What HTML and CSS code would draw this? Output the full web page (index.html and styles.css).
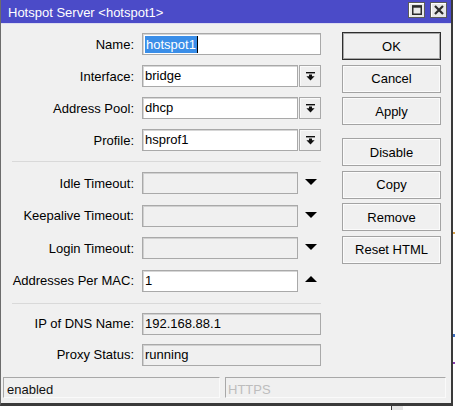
FILE: index.html
```html
<!DOCTYPE html>
<html>
<head>
<meta charset="utf-8">
<link rel="stylesheet" href="styles.css">
</head>
<body>
<div class="desktop">
  <div class="window">
    <div class="titlebar">
      <span class="title">Hotspot Server &lt;hotspot1&gt;</span>
      <div class="tbtns">
        <span class="tbtn"><svg width="10" height="10" viewBox="0 0 10 10"><rect x="0.75" y="1" width="8.5" height="8.25" fill="none" stroke="#2b2b2b" stroke-width="1.5"/><rect x="0" y="0.5" width="10" height="2.2" fill="#2b2b2b"/></svg></span>
        <span class="tbtn"><svg width="10" height="10" viewBox="0 0 10 10"><path d="M1 1 L9 9 M9 1 L1 9" stroke="#2b2b2b" stroke-width="2.2" fill="none"/></svg></span>
      </div>
    </div>
    <div class="content">
      <div class="form">
        <div class="group g1">
          <div class="row"><span class="lbl">Name:</span><div class="field"><div class="input full"><span class="hl">hotspot1</span><span class="caret"></span></div></div></div>
          <div class="row"><span class="lbl">Interface:</span><div class="field"><div class="input combo">bridge</div><span class="ddbtn"><svg width="9" height="9" viewBox="0 0 9 9"><rect x="0" y="0" width="9" height="1.4" fill="#111"/><polygon points="3,2.6 6,2.6 6,4.2 8.6,4.2 4.5,8.6 0.4,4.2 3,4.2" fill="#111"/></svg></span></div></div>
          <div class="row"><span class="lbl">Address Pool:</span><div class="field"><div class="input combo">dhcp</div><span class="ddbtn"><svg width="9" height="9" viewBox="0 0 9 9"><rect x="0" y="0" width="9" height="1.4" fill="#111"/><polygon points="3,2.6 6,2.6 6,4.2 8.6,4.2 4.5,8.6 0.4,4.2 3,4.2" fill="#111"/></svg></span></div></div>
          <div class="row"><span class="lbl">Profile:</span><div class="field"><div class="input combo">hsprof1</div><span class="ddbtn"><svg width="9" height="9" viewBox="0 0 9 9"><rect x="0" y="0" width="9" height="1.4" fill="#111"/><polygon points="3,2.6 6,2.6 6,4.2 8.6,4.2 4.5,8.6 0.4,4.2 3,4.2" fill="#111"/></svg></span></div></div>
        </div>
        <div class="sep s1"></div>
        <div class="group g2">
          <div class="row"><span class="lbl">Idle Timeout:</span><div class="field"><div class="input combo dis"></div><span class="tri down"></span></div></div>
          <div class="row"><span class="lbl">Keepalive Timeout:</span><div class="field"><div class="input combo dis"></div><span class="tri down"></span></div></div>
          <div class="row"><span class="lbl">Login Timeout:</span><div class="field"><div class="input combo dis"></div><span class="tri down"></span></div></div>
          <div class="row"><span class="lbl">Addresses Per MAC:</span><div class="field"><div class="input combo">1</div><span class="tri up"></span></div></div>
        </div>
        <div class="sep s2"></div>
        <div class="group g3">
          <div class="row"><span class="lbl">IP of DNS Name:</span><div class="field"><div class="input full dis">192.168.88.1</div></div></div>
          <div class="row"><span class="lbl">Proxy Status:</span><div class="field"><div class="input full dis">running</div></div></div>
        </div>
      </div>
      <div class="buttons">
        <div class="btn default">OK</div>
        <div class="btn">Cancel</div>
        <div class="btn">Apply</div>
        <div class="btn gap">Disable</div>
        <div class="btn">Copy</div>
        <div class="btn">Remove</div>
        <div class="btn">Reset HTML</div>
      </div>
    </div>
    <div class="statusbar">
      <div class="sfield first">enabled</div>
      <div class="sfield second">HTTPS</div>
    </div>
  </div>
  <div class="outside">
    <span class="bit b1"></span>
    <span class="bit b2"></span>
    <span class="bit b3"></span>
  </div>
</div>
<div class="below"><span class="mark"></span></div>
</body>
</html>
```
FILE: styles.css
```css
html, body {
  margin: 0;
  padding: 0;
  background: #ffffff;
  font-family: "Liberation Sans", Arial, sans-serif;
  font-size: 13px;
  color: #000;
}
.desktop {
  display: flex;
  width: 455px;
  height: 406px;
}
.window {
  box-sizing: border-box;
  width: 453px;
  height: 406px;
  border-left: 1px solid #6c6c6c;
  border-right: 2px solid #3a3a3a;
  border-bottom: 3px solid #3a3a3a;
  background: #f0f0f0;
  display: flex;
  flex-direction: column;
}
.outside {
  flex: 1;
  display: flex;
  flex-direction: column;
  background: #ffffff;
}
.bit { display: block; height: 2px; }
.b1 { margin-top: 232px; background: #d9a24a; }
.b2 { margin-top: 100px; background: #3f6fc2; height: 3px; }
.b3 { margin-top: 25px; background: #8a3fb0; }

.titlebar {
  height: 23px;
  background: #4b4bc8;
  color: #fff;
  display: flex;
  align-items: center;
  padding-left: 7px;
  border-bottom: 1px solid #dcdcf0;
}
.title { flex: 1; line-height: 23px; padding-top: 1px; }
.tbtns { display: flex; gap: 5px; margin-right: 4px; margin-top: -4px; }
.tbtn {
  box-sizing: border-box;
  width: 17px;
  height: 16px;
  border: 1px solid #5a5a5a;
  background: #e8e8e8;
  box-shadow: inset 1px 1px 0 #ffffff;
  display: flex;
  align-items: center;
  justify-content: center;
}

.content {
  display: flex;
  padding-top: 8px;
}
.form {
  margin-left: 11px;
  width: 309px;
}
.group { display: flex; flex-direction: column; }
.g1 { margin-top: 1px; gap: 10px; }
.g2 { gap: 10.67px; }
.g3 { gap: 9px; }
.row {
  display: grid;
  grid-template-columns: 122px 179px;
  column-gap: 8px;
  height: 22px;
  align-items: center;
}
.lbl { text-align: right; white-space: nowrap; }
.field { display: flex; height: 22px; align-items: center; }
.input {
  box-sizing: border-box;
  height: 22px;
  border: 1px solid #a9a9a9;
  box-shadow: inset 1px 1px 0 #d6d6d6;
  background: #fff;
  padding-left: 2px;
  line-height: 20px;
  white-space: nowrap;
  display: flex;
  align-items: center;
}
.input.full { width: 179px; }
.input.combo { width: 156px; }
.input.dis { background: #f0f0f0; box-shadow: inset 1px 1px 0 #d0d0d0; }
.hl {
  background: #3a8ee8;
  color: #fff;
  line-height: 17px;
  padding: 0 1px 0 1px;
}
.caret {
  width: 1px;
  height: 17px;
  background: #000;
}
.ddbtn {
  box-sizing: border-box;
  width: 22px;
  height: 22px;
  margin-left: 1px;
  border: 1px solid #a9a9a9;
  box-shadow: inset 1px 1px 0 #fafafa;
  background: #efefef;
  display: flex;
  align-items: center;
  justify-content: center;
}
.tri {
  width: 0;
  height: 0;
  margin-left: 7px;
  border-left: 6px solid transparent;
  border-right: 6px solid transparent;
}
.tri.down { border-top: 6px solid #000; margin-top: -2px; }
.tri.up { border-bottom: 6px solid #000; margin-top: -3px; }
.sep {
  height: 1px;
  background: #d9d9d9;
}
.s1 { margin: 10px 0 10px 0; }
.s2 { margin: 11px 0 9px 0; }

.buttons {
  margin-left: 21px;
  width: 99px;
  display: flex;
  flex-direction: column;
  gap: 4.5px;
}
.btn {
  box-sizing: border-box;
  height: 28px;
  border: 1px solid #a3a3a3;
  box-shadow: inset 0 0 0 1px #fbfbfb;
  background: #f0f0f0;
  display: flex;
  align-items: center;
  justify-content: center;
  white-space: nowrap;
}
.btn.default {
  border-color: #2e2e2e;
  box-shadow: inset 0 0 0 1px #a8a8a8;
}
.btn.gap { margin-top: 8.5px; }

.statusbar {
  display: flex;
  margin-top: 11px;
  height: 21px;
  gap: 5px;
  padding-left: 2px;
}
.sfield {
  box-sizing: border-box;
  height: 21px;
  border-top: 1px solid #a8a8a8;
  border-left: 1px solid #a8a8a8;
  border-bottom: 1px solid #fafafa;
  border-right: 1px solid #fafafa;
  line-height: 16px;
  padding-top: 4px;
  white-space: nowrap;
}
.sfield.first { width: 217px; padding-left: 3px; color: #111; }
.sfield.second { width: 221px; padding-left: 2px; color: #bdbdbd; }

.below {
  height: 4px;
  display: flex;
  padding-left: 391px;
}
.mark {
  width: 11px;
  height: 4px;
  border-left: 1px solid #3a3a3a;
  background: #e6e6e6;
}
```
